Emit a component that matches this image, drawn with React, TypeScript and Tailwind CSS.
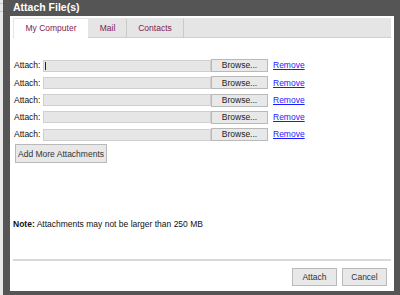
import React from "react";

const FONT = { fontFamily: '"Liberation Sans", Arial, sans-serif' };

function AttachRow({ focused }: { focused?: boolean }) {
  return (
    <div className="flex items-center h-[13px] mb-[4.3px]">
      <span className="w-[29px] text-[8.5px] text-[#111] leading-none">Attach:</span>
      <div className="relative w-[168px] h-[12px] bg-[#e6e6e6] border border-[#cfcfcf]">
        {focused && <div className="absolute left-[1px] top-[1px] w-[1px] h-[8px] bg-[#222]" />}
      </div>
      <button className="w-[57px] h-[13px] bg-[#e8e8e8] border border-[#b9b9b9] text-[8.5px] text-[#222] leading-none flex items-center justify-center">
        Browse...
      </button>
      <a className="ml-[5px] text-[8.5px] text-[#1a1aff] underline leading-none">Remove</a>
    </div>
  );
}

export default function App() {
  return (
    <div className="w-[400px] h-[295px] flex bg-[#e9e9e9] overflow-hidden" style={FONT}>
      {/* page behind dialog */}
      <div className="w-[3px] flex flex-col">
        <div className="h-[4px] border-b border-[#c8c8c8]" />
        <div className="h-[8px] border-b border-[#c8c8c8]" />
      </div>

      <div className="flex-1 flex flex-col bg-[#555555] pl-[7px] pr-[6px] pb-[4px]">
        <div className="h-[16px] flex items-center pl-[3px] text-white font-bold text-[10.5px]">
          Attach File(s)
        </div>

        <div className="flex-1 bg-white px-[3px] pt-[2px] flex flex-col">
          {/* tabs */}
          <div className="h-[20px] bg-[#e5e5e5] border-b border-[#cfcfcf] flex items-end pl-[1px]">
            <div className="w-[74px] h-[19px] bg-white -mb-[1px] flex items-center justify-center text-[8.5px] text-[#7d2350]">
              My Computer
            </div>
            <div className="w-[38px] h-[18px] border-r border-[#cacaca] flex items-center justify-center text-[8.5px] text-[#7d2350] ml-[1px]">
              Mail
            </div>
            <div className="w-[57px] h-[18px] border-r border-[#cacaca] flex items-center justify-center text-[8.5px] text-[#7d2350]">
              Contacts
            </div>
          </div>

          <div className="pt-[21px] pl-[1px] flex flex-col">
            <AttachRow focused />
            <AttachRow />
            <AttachRow />
            <AttachRow />
            <AttachRow />
            <button className="mt-[-1px] ml-[1px] w-[92px] h-[19px] bg-[#e8e8e8] border border-[#b9b9b9] text-[8.5px] text-[#333] leading-none flex items-center justify-center">
              Add More Attachments
            </button>
          </div>

          <div className="mt-[57px] text-[8.5px] text-[#111] leading-none">
            <span className="font-bold">Note:</span> Attachments may not be larger than 250 MB
          </div>

          <div className="mt-[30px] h-[2px] bg-[#d9d9d9]" />

          <div className="flex justify-end gap-[5px] pt-[7px] pr-[4px]">
            <button className="w-[45px] h-[18px] bg-[#e8e8e8] border border-[#b9b9b9] text-[8.5px] text-[#333] leading-none flex items-center justify-center">
              Attach
            </button>
            <button className="w-[45px] h-[18px] bg-[#e8e8e8] border border-[#b9b9b9] text-[8.5px] text-[#333] leading-none flex items-center justify-center">
              Cancel
            </button>
          </div>
        </div>
      </div>
    </div>
  );
}
